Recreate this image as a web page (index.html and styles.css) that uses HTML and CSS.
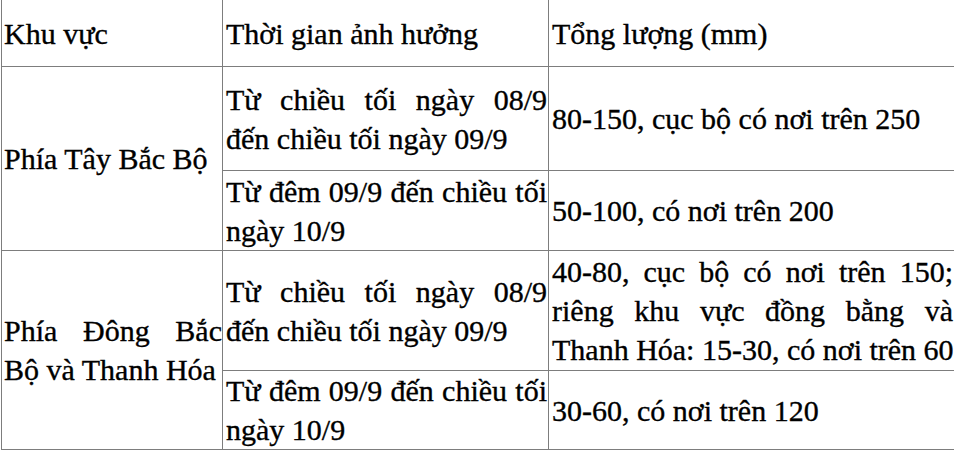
FILE: index.html
```html
<!DOCTYPE html>
<html>
<head>
<meta charset="utf-8">
<title>Lượng mưa</title>
<link rel="stylesheet" href="styles.css">
</head>
<body>
<table class="rain">
  <colgroup>
    <col class="c-area">
    <col class="c-time">
    <col class="c-total">
  </colgroup>
  <tr class="r-head">
    <td class="area">Khu vực</td>
    <td>Thời gian ảnh hưởng</td>
    <td>Tổng lượng (mm)</td>
  </tr>
  <tr class="r-1a">
    <td class="area" rowspan="2">Phía Tây Bắc Bộ</td>
    <td><span class="ln j">Từ chiều tối ngày 08/9</span><span class="ln">đến chiều tối ngày 09/9</span></td>
    <td>80-150, cục bộ có nơi trên 250</td>
  </tr>
  <tr class="r-1b">
    <td><span class="ln j">Từ đêm 09/9 đến chiều tối</span><span class="ln">ngày 10/9</span></td>
    <td>50-100, có nơi trên 200</td>
  </tr>
  <tr class="r-2a">
    <td class="area" rowspan="2"><span class="ln j">Phía Đông Bắc</span><span class="ln">Bộ và Thanh Hóa</span></td>
    <td><span class="ln j">Từ chiều tối ngày 08/9</span><span class="ln">đến chiều tối ngày 09/9</span></td>
    <td><span class="ln j">40-80, cục bộ có nơi trên 150;</span><span class="ln j">riêng khu vực đồng bằng và</span><span class="ln">Thanh Hóa: 15-30, có nơi trên 60</span></td>
  </tr>
  <tr class="r-2b">
    <td><span class="ln j">Từ đêm 09/9 đến chiều tối</span><span class="ln">ngày 10/9</span></td>
    <td>30-60, có nơi trên 120</td>
  </tr>
</table>
</body>
</html>
```
FILE: styles.css
```css
html, body {
  margin: 0;
  padding: 0;
  background: #ffffff;
}

body {
  font-family: "Liberation Serif", "Times New Roman", serif;
  font-size: 30px;
  line-height: 39px;
  color: #000000;
}

.rain {
  border-collapse: collapse;
  table-layout: fixed;
  width: 953px;
  margin: -1px 0 0 1px;
}

.c-area { width: 221px; }
.c-time { width: 326px; }
.c-total { width: 406px; }

.rain td {
  border: 1px solid #7d7d7d;
  padding: 0 1px 0 3px;
  vertical-align: middle;
  text-align: justify;
  white-space: nowrap;
  -webkit-text-stroke: 0.35px #000000;
}

.rain td.area {
  padding-left: 2px;
  padding-right: 0;
}

.ln {
  display: block;
  text-align: left;
}

.ln.j {
  text-align: justify;
  text-align-last: justify;
}

.r-head { height: 67px; }
.r-1a { height: 104px; }
.r-1b { height: 80px; }
.r-2a { height: 120px; }
.r-2b { height: 78px; }
```
